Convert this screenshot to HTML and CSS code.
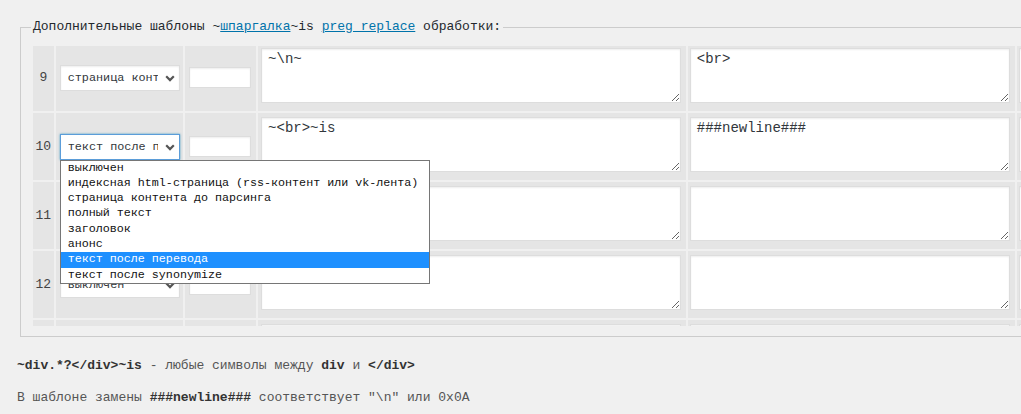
FILE: index.html
```html
<!DOCTYPE html>
<html lang="ru">
<head>
    <meta charset="UTF-8">
    <meta name="viewport" content="width=device-width, initial-scale=1.0">
    <title>Шаблоны обработки</title>
    <link rel="stylesheet" href="styles.css">
</head>
<body>
    <fieldset class="patterns">
        <legend>Дополнительные шаблоны ~<a href="#">шпаргалка</a>~is <a href="#">preg_replace</a> обработки:</legend>
        <div class="scroll">
            <table class="rules">
                <tr>
                    <td class="num">9</td>
                    <td class="sel">
                        <div class="select">
                            <span class="value">страница контента до парсинга</span>
                            <svg class="chevron" width="10" height="7" viewBox="0 0 10 7"><path d="M1.2 1.3 L5 5.1 L8.8 1.3" /></svg>
                        </div>
                    </td>
                    <td class="inp"><input type="text"></td>
                    <td class="pat"><textarea>~\n~</textarea></td>
                    <td class="rep"><textarea>&lt;br&gt;</textarea></td>
                    <td class="more"><textarea></textarea></td>
                </tr>
                <tr>
                    <td class="num">10</td>
                    <td class="sel">
                        <div class="select focus">
                            <span class="value">текст после перевода</span>
                            <svg class="chevron" width="10" height="7" viewBox="0 0 10 7"><path d="M1.2 1.3 L5 5.1 L8.8 1.3" /></svg>
                            <ul class="options">
                                <li>выключен</li>
                                <li>индексная html-страница (rss-контент или vk-лента)</li>
                                <li>страница контента до парсинга</li>
                                <li>полный текст</li>
                                <li>заголовок</li>
                                <li>анонс</li>
                                <li class="active">текст после перевода</li>
                                <li>текст после synonymize</li>
                            </ul>
                        </div>
                    </td>
                    <td class="inp"><input type="text"></td>
                    <td class="pat"><textarea>~&lt;br&gt;~is</textarea></td>
                    <td class="rep"><textarea>###newline###</textarea></td>
                    <td class="more"><textarea></textarea></td>
                </tr>
                <tr>
                    <td class="num">11</td>
                    <td class="sel">
                        <div class="select">
                            <span class="value">выключен</span>
                            <svg class="chevron" width="10" height="7" viewBox="0 0 10 7"><path d="M1.2 1.3 L5 5.1 L8.8 1.3" /></svg>
                        </div>
                    </td>
                    <td class="inp"><input type="text"></td>
                    <td class="pat"><textarea></textarea></td>
                    <td class="rep"><textarea></textarea></td>
                    <td class="more"><textarea></textarea></td>
                </tr>
                <tr>
                    <td class="num">12</td>
                    <td class="sel">
                        <div class="select">
                            <span class="value">выключен</span>
                            <svg class="chevron" width="10" height="7" viewBox="0 0 10 7"><path d="M1.2 1.3 L5 5.1 L8.8 1.3" /></svg>
                        </div>
                    </td>
                    <td class="inp"><input type="text"></td>
                    <td class="pat"><textarea></textarea></td>
                    <td class="rep"><textarea></textarea></td>
                    <td class="more"><textarea></textarea></td>
                </tr>
                <tr>
                    <td class="num">13</td>
                    <td class="sel">
                        <div class="select">
                            <span class="value">выключен</span>
                            <svg class="chevron" width="10" height="7" viewBox="0 0 10 7"><path d="M1.2 1.3 L5 5.1 L8.8 1.3" /></svg>
                        </div>
                    </td>
                    <td class="inp"><input type="text"></td>
                    <td class="pat"><textarea></textarea></td>
                    <td class="rep"><textarea></textarea></td>
                    <td class="more"><textarea></textarea></td>
                </tr>
            </table>
        </div>
    </fieldset>

    <p class="hint first"><b>~div.*?&lt;/div&gt;~is</b> - любые символы между <b>div</b> и <b>&lt;/div&gt;</b></p>
    <p class="hint">В шаблоне замены <b>###newline###</b> соответствует "\n" или 0x0A</p>
</body>
</html>
```

FILE: styles.css
```css
body {
    margin: 0;
    background-color: #f0f0f0;
    font-family: "Liberation Mono", "DejaVu Sans Mono", monospace;
    font-size: 13px;
    color: #444;
    overflow: hidden;
}

.patterns {
    width: 1200px;
    margin: 18px 0 0 20px;
    padding: 10px 0 10px 10px;
    border: 1px solid #ccc;
    box-sizing: border-box;
    min-width: 0;
}

    .patterns legend {
        padding: 0 2px;
        line-height: 18px;
        color: #23282d;
    }

    .patterns a {
        color: #0073aa;
    }

.scroll {
    height: 280px;
    overflow: hidden;
}

.rules {
    border-collapse: separate;
    border-spacing: 2px;
    margin-top: -4px;
}

    .rules td {
        background-color: #e5e5e5;
        padding: 0;
        height: 67px;
        vertical-align: middle;
    }

    .rules td.num {
        width: 21px;
        text-align: center;
        color: #444;
    }

    .rules td.sel {
        width: 128px;
    }

    .rules td.inp {
        width: 71px;
    }

    .rules td.pat {
        width: 428px;
        vertical-align: top;
    }

    .rules td.rep {
        width: 328px;
        vertical-align: top;
    }

    .rules td.more {
        width: 200px;
        vertical-align: top;
    }

.select {
    position: relative;
    display: flex;
    align-items: center;
    width: 120px;
    height: 26px;
    margin-left: 4px;
    padding-left: 7px;
    box-sizing: border-box;
    background-color: #fff;
    border: 1px solid #ddd;
    box-shadow: inset 0 1px 2px rgba(0, 0, 0, 0.07);
    font-size: 11.8px;
    color: #32373c;
}

    .select.focus {
        border-color: #5b9dd9;
        box-shadow: 0 0 2px rgba(30, 140, 190, 0.8);
    }

    .select .value {
        width: 90px;
        overflow: hidden;
        white-space: nowrap;
    }

    .select .chevron {
        position: absolute;
        right: 4px;
        top: 9px;
    }

        .select .chevron path {
            fill: none;
            stroke: #555;
            stroke-width: 2.2;
        }

.options {
    position: absolute;
    top: calc(100% + 1px);
    left: -1px;
    z-index: 10;
    width: 370px;
    margin: 0;
    padding: 0;
    list-style: none;
    box-sizing: border-box;
    background-color: #fff;
    border: 1px solid #767676;
    font-size: 11.7px;
    color: #111;
}

    .options li {
        height: 15.3px;
        line-height: 15.3px;
        padding-left: 7px;
        white-space: nowrap;
    }

        .options li.active {
            background-color: #1e90ff;
            color: #fff;
        }

.rules input {
    display: block;
    width: 62px;
    height: 21px;
    margin-left: 4px;
    box-sizing: border-box;
    background-color: #fff;
    border: 1px solid #ddd;
    box-shadow: inset 0 1px 2px rgba(0, 0, 0, 0.07);
}

.rules textarea {
    display: block;
    height: 55px;
    margin-top: 4px;
    padding: 2px 6px;
    box-sizing: border-box;
    background-color: #fff;
    border: 1px solid #ddd;
    box-shadow: inset 0 1px 2px rgba(0, 0, 0, 0.07);
    font-family: "Liberation Mono", "DejaVu Sans Mono", monospace;
    font-size: 14px;
    line-height: 17px;
    color: #32373c;
}

.rules td.pat textarea {
    width: 420px;
    margin-left: 3px;
}

.rules td.rep textarea {
    width: 320px;
    margin-left: 2px;
}

.rules td.more textarea {
    width: 190px;
    margin-left: 2px;
}

.hint {
    margin: 13px 0 0 17px;
    line-height: 19px;
    color: #555;
}

    .hint.first {
        margin-top: 19px;
    }

    .hint b {
        color: #333;
    }
```
